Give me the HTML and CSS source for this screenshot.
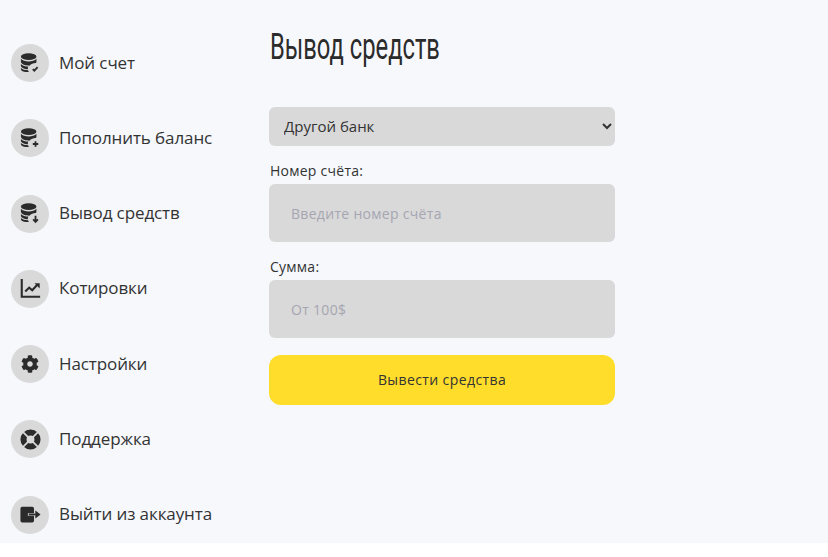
FILE: index.html
```html
<!DOCTYPE html>
<html lang="ru">
<head>
    <meta charset="UTF-8">
    <meta name="viewport" content="width=device-width, initial-scale=1.0">
    <title>Вывод средств</title>
    <link rel="stylesheet" href="styles.css">
</head>
<body>
    <div class="page">
        <nav class="sidebar">
            <a class="nav-item" href="#">
                <span class="nav-icon">
                    <svg viewBox="1 1 23 23" class="icon">
                        <use href="#db"/>
                        <path class="cut" d="M12.500 19 16 23l7-7.500-3-2.500-4 4.500-1.500-1.500z"/>
                        <path class="line" d="M15 18.600l1.700 1.800 3.600-3.900"/>
                    </svg>
                </span>
                <span class="nav-label">Мой счет</span>
            </a>
            <a class="nav-item" href="#">
                <span class="nav-icon">
                    <svg viewBox="1 1 23 23" class="icon">
                        <use href="#db"/>
                        <circle class="cut" cx="18" cy="18.500" r="5.500"/>
                        <path class="line" d="M18 15.500v6M15 18.500h6"/>
                    </svg>
                </span>
                <span class="nav-label">Пополнить баланс</span>
            </a>
            <a class="nav-item" href="#">
                <span class="nav-icon">
                    <svg viewBox="1 1 23 23" class="icon">
                        <use href="#db"/>
                        <circle class="cut" cx="18" cy="18.500" r="5.500"/>
                        <path class="line" d="M18 15v6.500M15.400 19l2.600 2.700 2.600-2.700"/>
                    </svg>
                </span>
                <span class="nav-label">Вывод средств</span>
            </a>
            <a class="nav-item" href="#">
                <span class="nav-icon">
                    <svg viewBox="0 0 24 24" class="icon">
                        <path class="line thick" d="M2 1v20.500h21"/>
                        <path class="line thick" d="M6 15.500l4.500-4.500 3.500 3 6-6.500"/>
                        <path d="M16.500 6h6v6z"/>
                    </svg>
                </span>
                <span class="nav-label">Котировки</span>
            </a>
            <a class="nav-item" href="#">
                <span class="nav-icon">
                    <svg viewBox="0 0 512 512" class="icon icon-sm">
                        <path fill-rule="evenodd" d="M487.400 315.700l-42.600-24.600c4.300-23.200 4.300-47 0-70.200l42.600-24.600c4.900-2.800 7.100-8.600 5.500-14-11.100-35.600-30-67.800-54.700-94.600-3.800-4.100-10-5.100-14.800-2.300L380.800 110c-17.900-15.400-38.500-27.300-60.800-35.100V25.800c0-5.600-3.900-10.500-9.400-11.700-36.700-8.200-74.300-7.800-109.200 0-5.500 1.200-9.400 6.100-9.400 11.700V75c-22.200 7.900-42.800 19.800-60.800 35.100L88.700 85.500c-4.900-2.800-11-1.900-14.800 2.300-24.700 26.700-43.600 58.900-54.700 94.600-1.700 5.400.6 11.200 5.500 14L67.300 221c-4.300 23.200-4.300 47 0 70.200l-42.600 24.600c-4.900 2.800-7.100 8.600-5.500 14 11.100 35.600 30 67.800 54.700 94.600 3.800 4.100 10 5.100 14.800 2.300l42.600-24.600c17.900 15.400 38.500 27.300 60.800 35.100v49.200c0 5.600 3.900 10.500 9.400 11.700 36.700 8.200 74.300 7.800 109.200 0 5.500-1.200 9.400-6.100 9.400-11.700v-49.200c22.200-7.900 42.800-19.800 60.800-35.100l42.600 24.600c4.900 2.800 11 1.900 14.800-2.300 24.700-26.700 43.600-58.900 54.700-94.600 1.500-5.500-.7-11.300-5.600-14.100zM256 336c-44.100 0-80-35.900-80-80s35.900-80 80-80 80 35.900 80 80-35.900 80-80 80z"/>
                    </svg>
                </span>
                <span class="nav-label">Настройки</span>
            </a>
            <a class="nav-item" href="#">
                <span class="nav-icon">
                    <svg viewBox="0 0 24 24" class="icon">
                        <circle cx="12" cy="12" r="8" class="ring"/>
                        <path class="spoke" d="M3.500 3.500l6 6M20.500 3.500l-6 6M3.500 20.500l6-6M20.500 20.500l-6-6"/>
                    </svg>
                </span>
                <span class="nav-label">Поддержка</span>
            </a>
            <a class="nav-item" href="#">
                <span class="nav-icon">
                    <svg viewBox="0 0 24 24" class="icon">
                        <path d="M2.500 3h11.500a2 2 0 0 1 2 2v5.500H9v3h7V19a2 2 0 0 1-2 2H2.500a2 2 0 0 1-2-2V5a2 2 0 0 1 2-2z"/>
                        <path class="line" d="M10 12h8"/>
                        <path d="M17.500 7.500l6 4.500-6 4.500z"/>
                    </svg>
                </span>
                <span class="nav-label">Выйти из аккаунта</span>
            </a>
        </nav>

        <main class="content">
            <h1 class="page-title">Вывод средств</h1>
            <form class="withdraw-form">
                <select class="field-select">
                    <option>Другой банк</option>
                </select>
                <label class="field-label" for="account">Номер счёта:</label>
                <input class="field-input" id="account" type="text" placeholder="Введите номер счёта">
                <label class="field-label" for="amount">Сумма:</label>
                <input class="field-input" id="amount" type="text" placeholder="От 100$">
                <button class="submit-button" type="button">Вывести средства</button>
            </form>
        </main>
    </div>

    <svg class="defs" width="0" height="0">
        <defs>
            <g id="db">
                <ellipse cx="10.500" cy="5" rx="8.500" ry="3.600"/>
                <path d="M2 7.400c1.600 2 5 2.900 8.500 2.900s6.900-.9 8.500-2.900v3.100c0 .5-.2 1-.6 1.400-1.900-.2-5.400.7-7 3-4 0-8.900-1.300-9.400-4z"/>
                <path d="M2 13c2 2 5 2.700 8 2.800-.4 1-.5 2-.3 3-3.400 0-7.700-1.300-7.700-3.800z"/>
                <path d="M2 17.300c1.800 1.600 4.700 2.400 7.800 2.500.2.800.6 1.500 1.100 2.100-4.300.2-8.900-1-8.900-3.500z"/>
            </g>
        </defs>
    </svg>
</body>
</html>
```

FILE: styles.css
```css
* {
    box-sizing: border-box;
}
html, body {
    background-color: #fff;
}
body {
    margin: 0;
    font-family: "Open Sans", "Noto Sans", Arial, sans-serif;
    color: #333;
}
.page {
    display: flex;
    height: 543px;
    background-color: #f6f8fc;
}
.defs {
    position: absolute;
}

/* левое меню */
.sidebar {
    display: flex;
    flex-direction: column;
    gap: 37.3px;
    width: 269px;
    padding: 44px 0 0 11px;
}
.nav-item {
    display: flex;
    align-items: center;
    gap: 10px;
    height: 38px;
    font-size: 17px;
    letter-spacing: -0.1px;
    color: #333;
    text-decoration: none;
}
.nav-label {
    padding-bottom: 2px;
}
.nav-icon {
    display: flex;
    align-items: center;
    justify-content: center;
    width: 38px;
    height: 38px;
    border-radius: 50%;
    background-color: #d9d9d9;
}
.icon {
    width: 21px;
    height: 21px;
    fill: #2b2b2b;
}
.icon-sm {
    width: 18px;
    height: 18px;
}
.icon .cut {
    fill: #d9d9d9;
}
.icon .line {
    fill: none;
    stroke: #2b2b2b;
    stroke-width: 2;
}
.icon .thick {
    stroke-width: 2.4;
}
.icon .ring {
    fill: none;
    stroke: #2b2b2b;
    stroke-width: 7;
}
.icon .spoke {
    fill: none;
    stroke: #d9d9d9;
    stroke-width: 2;
}

/* форма вывода */
.content {
    width: 346px;
}
.page-title {
    display: inline-block;
    margin: 26px 0 0 1px;
    font-family: "Roboto", Arial, sans-serif;
    font-size: 36px;
    line-height: 42px;
    font-weight: 400;
    color: #2b2b2b;
    white-space: nowrap;
    transform: scaleX(0.66);
    transform-origin: left center;
}
.withdraw-form {
    display: flex;
    flex-direction: column;
    margin-top: 39px;
}
.field-select {
    height: 39px;
    padding: 0 0 2px 11px;
    border: none;
    border-radius: 6px;
    background-color: #d9d9d9;
    font-family: inherit;
    font-size: 15px;
    color: #333;
}
.field-label {
    margin-top: 16px;
    margin-bottom: 5px;
    padding-left: 1px;
    font-size: 14px;
    line-height: 17px;
    letter-spacing: 0.25px;
    color: #333;
}
.field-input {
    height: 58px;
    padding: 0 22px;
    border: none;
    border-radius: 6px;
    background-color: #d9d9d9;
    font-family: inherit;
    font-size: 14px;
    letter-spacing: 0.3px;
}
.field-input::placeholder {
    color: #a6a6b2;
}
.submit-button {
    height: 50px;
    margin-top: 17px;
    padding-bottom: 2px;
    border: none;
    border-radius: 12px;
    background-color: #ffdd2a;
    font-family: inherit;
    font-size: 14px;
    letter-spacing: 0.4px;
    color: #333;
}
```
